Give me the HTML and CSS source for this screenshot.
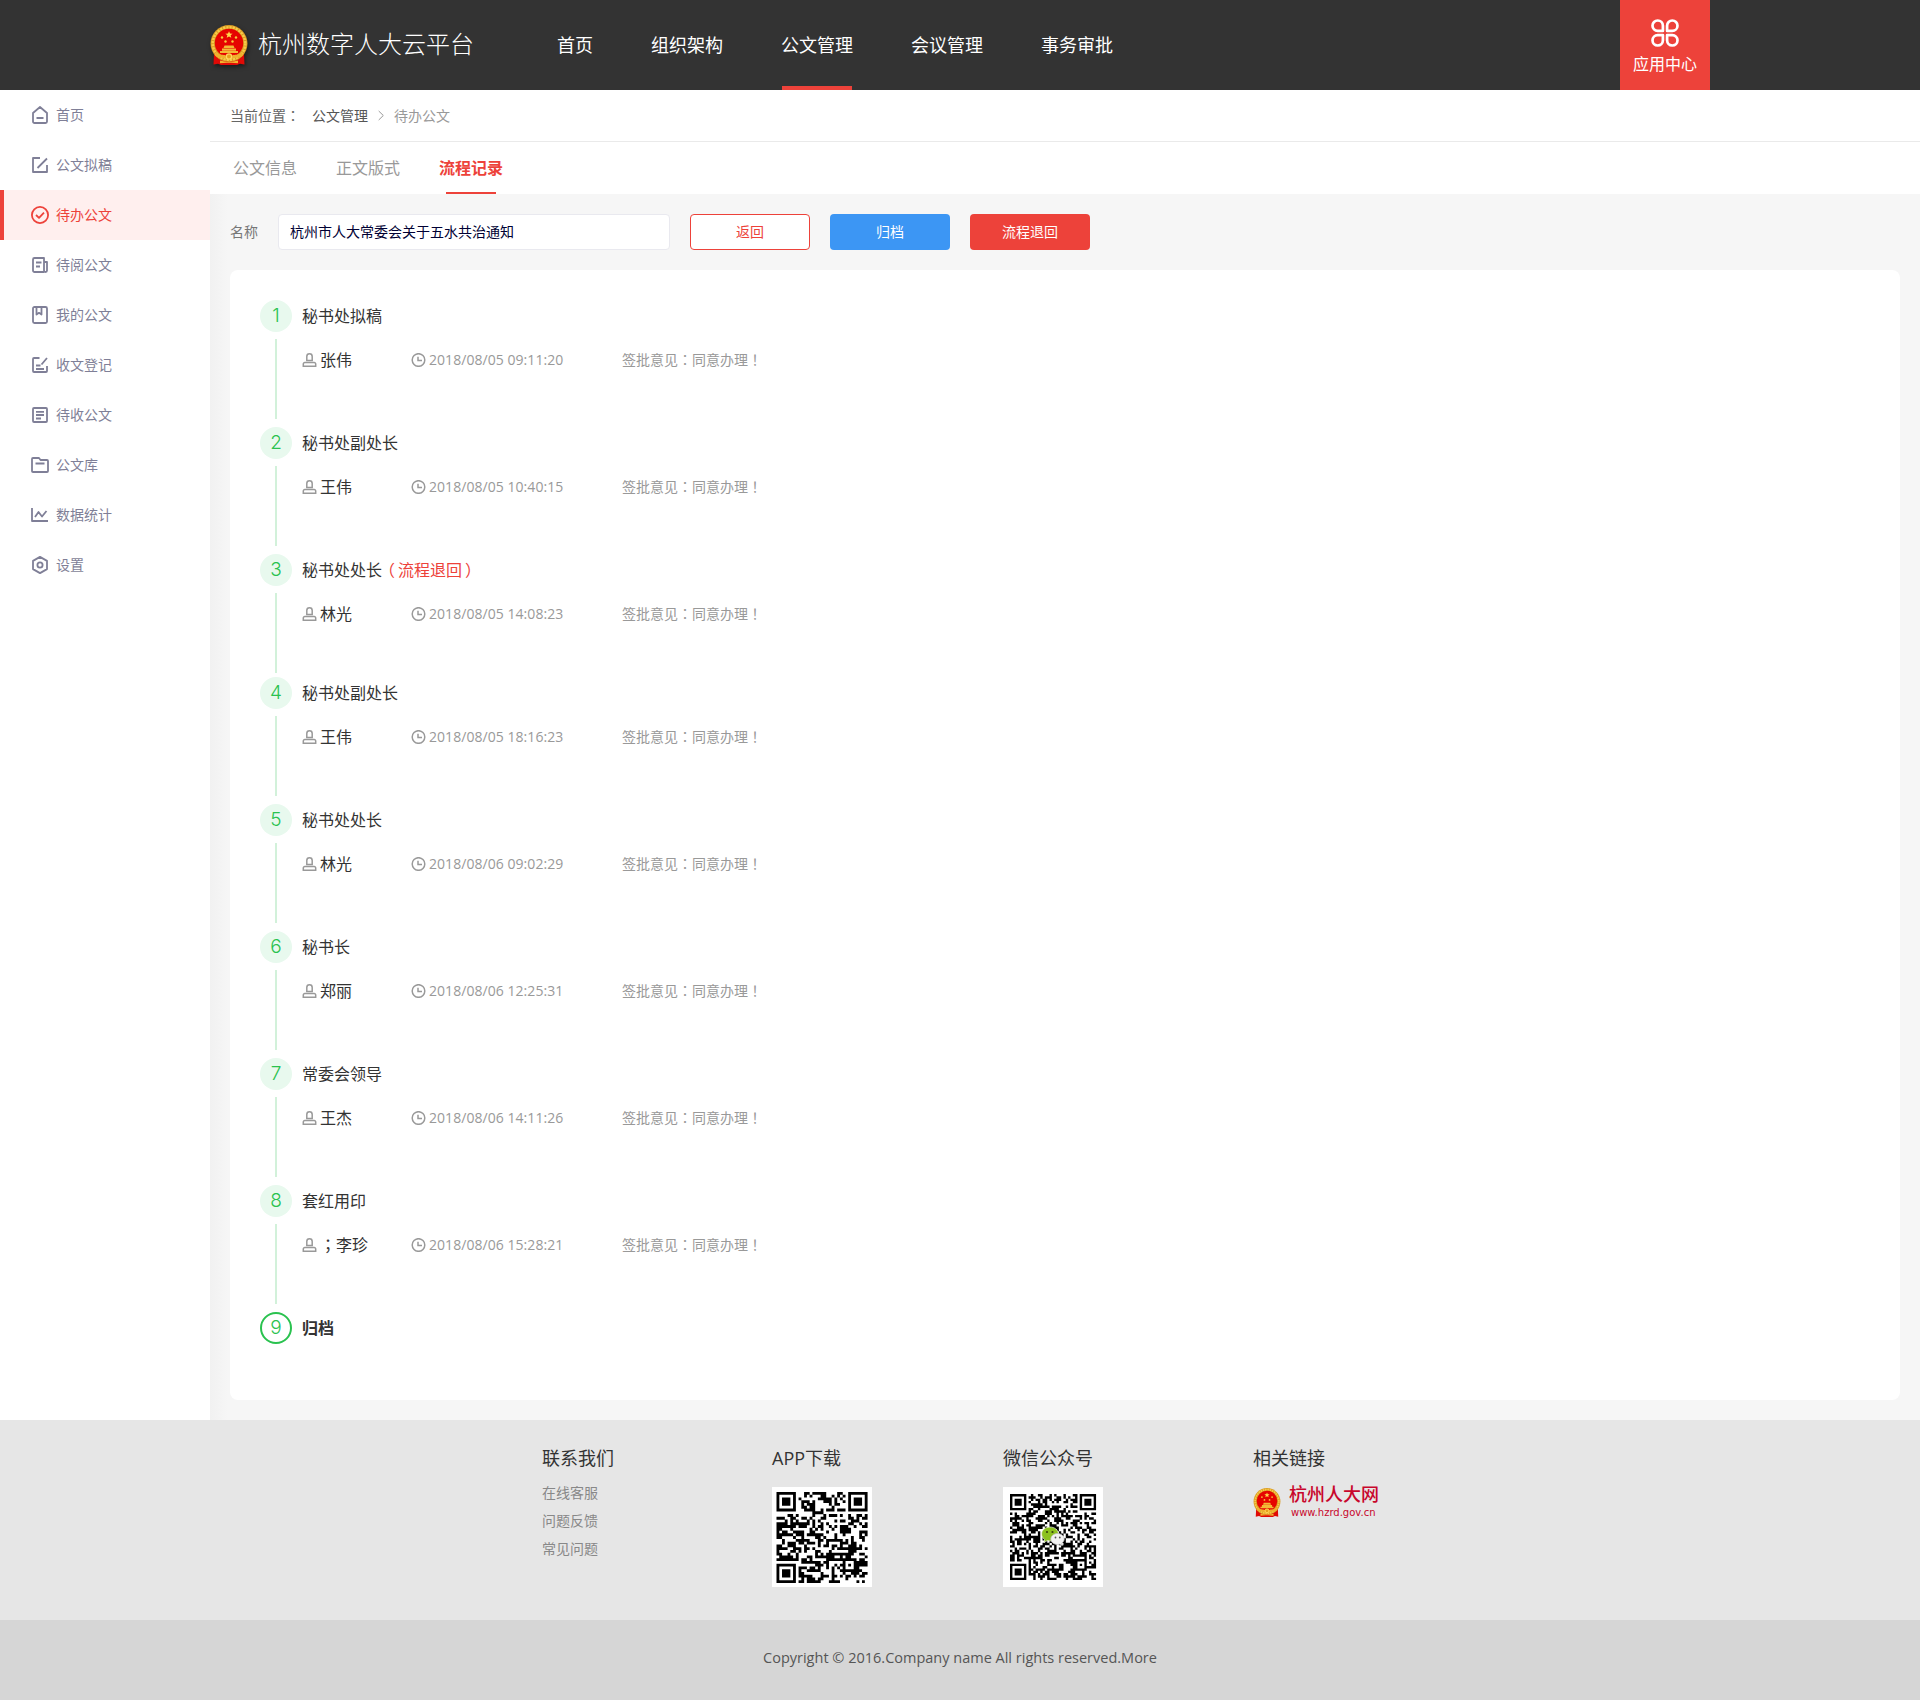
FILE: index.html
```html
<!DOCTYPE html>
<html>
<head>
<meta charset="utf-8">
<title>杭州数字人大云平台</title>
<link rel="stylesheet" href="styles.css">
</head>
<body>
<svg class="sprite" aria-hidden="true">
  <symbol id="emblem" viewBox="0 0 38 40">
    <path d="M4 29h30l.5 10.500-4.500-.8-3 1.300H11l-3-1.300-4.500.8z" fill="#e00a06"/>
    <circle cx="19" cy="18.500" r="18.500" fill="#d99a22"/>
    <circle cx="19" cy="18.500" r="16.300" fill="none" stroke="#f7ca48" stroke-width="2.600" stroke-dasharray="2.200 1"/>
    <circle cx="19" cy="18" r="14.200" fill="#e60400"/>
    <path d="M19 6.200l1 2.300 2.600.2-2 1.600.7 2.500-2.300-1.300-2.300 1.300.7-2.500-2-1.600 2.600-.2z" fill="#ffd84a"/>
    <g fill="#f8c93c"><circle cx="12" cy="12.500" r="1.200"/><circle cx="26" cy="12.500" r="1.200"/><circle cx="15.500" cy="16.500" r="1.200"/><circle cx="22.500" cy="16.500" r="1.200"/></g>
    <path d="M14.500 20.500h9l1 2.500h-11zM12 23.500h14v2.300H12zM10 26h18v2H10z" fill="#f3b936"/>
    <path d="M6 27c4 4 7 2 10 3.500C17 28.500 21 28.500 22 30.500c3-1.500 6 .5 10-3.500l1 3.500c-4 3.500-8 1-11 3.500h-6c-3-2.500-7 0-11-3.500z" fill="#efb02d"/>
    <circle cx="19" cy="31.500" r="2.600" fill="#e8a01b" stroke="#ffd75e" stroke-width="1.200"/>
    <path d="M10 35.500l7 1.500h4l7-1.500v2.800l-7-.6h-4l-7 .6z" fill="#f2b42f"/>
  </symbol>
  <symbol id="i-home" viewBox="0 0 18 18"><path d="M2 7L9 1l7 6v8.500a1.500 1.500 0 0 1-1.500 1.500h-11A1.500 1.500 0 0 1 2 15.500zM5.500 12h7"/></symbol>
  <symbol id="i-draft" viewBox="0 0 18 18"><path d="M9 2H2v14h14V9M6.500 12L16 2.500"/></symbol>
  <symbol id="i-todo" viewBox="0 0 18 18"><circle cx="9" cy="9" r="8.100"/><path d="M5 9l3 2.800 5-5.200"/></symbol>
  <symbol id="i-read" viewBox="0 0 18 18"><path d="M13 16H3.500A1.500 1.500 0 0 1 2 14.500v-11A1.500 1.500 0 0 1 3.500 2H13v12.500a1.500 1.500 0 0 0 3 0V6h-3M5 6.500h5.500M5 10.500h4"/></symbol>
  <symbol id="i-mine" viewBox="0 0 18 18"><rect x="2" y="1" width="14" height="16" rx="1.500"/><path d="M5.500 1v7.500L8 6.800l2.500 1.700V1"/></symbol>
  <symbol id="i-reg" viewBox="0 0 18 18"><path d="M8.500 2H3a1 1 0 0 0-1 1v12a1 1 0 0 0 1 1h12a1 1 0 0 0 1-1V10M10.500 8.500L16 2M5 9.500h4.500M5 13h8"/></symbol>
  <symbol id="i-inbox" viewBox="0 0 18 18"><rect x="2" y="2" width="14" height="14" rx="1"/><path d="M5 5.800h8M5 9h8M5 12.500h5"/></symbol>
  <symbol id="i-folder" viewBox="0 0 18 18"><path d="M1 15.500V3a1 1 0 0 1 1-1h6l1.500 2H16a1 1 0 0 1 1 1v10a1 1 0 0 1-1 1H2a1 1 0 0 1-1-1M4.500 7.500h9"/></symbol>
  <symbol id="i-chart" viewBox="0 0 18 18"><path d="M1 2v13h16M4 11l3.500-5 3.500 4.500L15.500 5"/></symbol>
  <symbol id="i-set" viewBox="0 0 18 18"><path d="M9 .9l7 4v8.200l-7 4-7-4V4.900z"/><circle cx="9" cy="9" r="2.600"/></symbol>
  <symbol id="i-user" viewBox="0 0 14 14"><path d="M4.300 7.500V3.400a2.700 2.600 0 0 1 5.400 0V7.500z"/><path d="M.8 13.200V11a1.500 1.500 0 0 1 1.500-1.500h9.400a1.500 1.500 0 0 1 1.500 1.500v2.200z"/></symbol>
  <symbol id="i-clock" viewBox="0 0 14 14"><circle cx="7" cy="7" r="6.300"/><path d="M6.500 3.800V7.500H10.500"/></symbol>
</svg>

<header class="header">
  <div class="brand"><svg class="brand-emblem"><use href="#emblem"/></svg><span>杭州数字人大云平台</span></div>
  <nav class="nav">
    <a>首页</a><a>组织架构</a><a class="active">公文管理</a><a>会议管理</a><a>事务审批</a>
  </nav>
  <a class="apps">
    <svg viewBox="0 0 28 28"><path d="M11.900 11.900H6.700A5.200 5.200 0 1 1 11.900 6.700zM16.100 11.900V6.700A5.200 5.200 0 1 1 21.300 11.900zM11.900 16.100V21.300A5.200 5.200 0 1 1 6.700 16.100zM16.100 16.100H21.300A5.200 5.200 0 1 1 16.100 21.300z"/></svg>
    <span>应用中心</span>
  </a>
</header>

<div class="body">
  <aside class="sidebar">
    <a><svg><use href="#i-home"/></svg>首页</a>
    <a><svg><use href="#i-draft"/></svg>公文拟稿</a>
    <a class="active"><svg><use href="#i-todo"/></svg>待办公文</a>
    <a><svg><use href="#i-read"/></svg>待阅公文</a>
    <a><svg><use href="#i-mine"/></svg>我的公文</a>
    <a><svg><use href="#i-reg"/></svg>收文登记</a>
    <a><svg><use href="#i-inbox"/></svg>待收公文</a>
    <a><svg><use href="#i-folder"/></svg>公文库</a>
    <a><svg><use href="#i-chart"/></svg>数据统计</a>
    <a><svg><use href="#i-set"/></svg>设置</a>
  </aside>

  <main class="main">
    <div class="crumbs">
      <span>当前位置<span class="punct" lang="zh-TW">：</span></span><span class="crumb-link">公文管理</span>
      <svg viewBox="0 0 6 10"><path d="M.7.500l4.600 4.500L.7 9.500"/></svg>
      <span class="crumb-now">待办公文</span>
    </div>
    <div class="tabs"><a>公文信息</a><a>正文版式</a><a class="active">流程记录</a></div>
    <div class="content">
      <div class="toolbar">
        <label>名称</label>
        <div class="field">杭州市人大常委会关于五水共治通知</div>
        <a class="btn btn-line">返回</a><a class="btn btn-blue">归档</a><a class="btn btn-red">流程退回</a>
      </div>
      <ol class="steps">
        <li class="step">
          <div class="rail"><b>1</b><i></i></div>
          <div class="info"><h3>秘书处拟稿</h3>
            <div class="meta"><span class="who"><svg><use href="#i-user"/></svg>张伟</span><span class="when"><svg><use href="#i-clock"/></svg>2018/08/05 09:11:20</span><span class="note">签批意见<span class="punct" lang="zh-TW">：</span>同意办理<span class="punct" lang="zh-TW">！</span></span></div></div>
        </li>
        <li class="step">
          <div class="rail"><b>2</b><i></i></div>
          <div class="info"><h3>秘书处副处长</h3>
            <div class="meta"><span class="who"><svg><use href="#i-user"/></svg>王伟</span><span class="when"><svg><use href="#i-clock"/></svg>2018/08/05 10:40:15</span><span class="note">签批意见<span class="punct" lang="zh-TW">：</span>同意办理<span class="punct" lang="zh-TW">！</span></span></div></div>
        </li>
        <li class="step returned">
          <div class="rail"><b>3</b><i></i></div>
          <div class="info"><h3>秘书处处长<em><span class="open">（</span>流程退回<span class="close">）</span></em></h3>
            <div class="meta"><span class="who"><svg><use href="#i-user"/></svg>林光</span><span class="when"><svg><use href="#i-clock"/></svg>2018/08/05 14:08:23</span><span class="note">签批意见<span class="punct" lang="zh-TW">：</span>同意办理<span class="punct" lang="zh-TW">！</span></span></div></div>
        </li>
        <li class="step">
          <div class="rail"><b>4</b><i></i></div>
          <div class="info"><h3>秘书处副处长</h3>
            <div class="meta"><span class="who"><svg><use href="#i-user"/></svg>王伟</span><span class="when"><svg><use href="#i-clock"/></svg>2018/08/05 18:16:23</span><span class="note">签批意见<span class="punct" lang="zh-TW">：</span>同意办理<span class="punct" lang="zh-TW">！</span></span></div></div>
        </li>
        <li class="step">
          <div class="rail"><b>5</b><i></i></div>
          <div class="info"><h3>秘书处处长</h3>
            <div class="meta"><span class="who"><svg><use href="#i-user"/></svg>林光</span><span class="when"><svg><use href="#i-clock"/></svg>2018/08/06 09:02:29</span><span class="note">签批意见<span class="punct" lang="zh-TW">：</span>同意办理<span class="punct" lang="zh-TW">！</span></span></div></div>
        </li>
        <li class="step">
          <div class="rail"><b>6</b><i></i></div>
          <div class="info"><h3>秘书长</h3>
            <div class="meta"><span class="who"><svg><use href="#i-user"/></svg>郑丽</span><span class="when"><svg><use href="#i-clock"/></svg>2018/08/06 12:25:31</span><span class="note">签批意见<span class="punct" lang="zh-TW">：</span>同意办理<span class="punct" lang="zh-TW">！</span></span></div></div>
        </li>
        <li class="step">
          <div class="rail"><b>7</b><i></i></div>
          <div class="info"><h3>常委会领导</h3>
            <div class="meta"><span class="who"><svg><use href="#i-user"/></svg>王杰</span><span class="when"><svg><use href="#i-clock"/></svg>2018/08/06 14:11:26</span><span class="note">签批意见<span class="punct" lang="zh-TW">：</span>同意办理<span class="punct" lang="zh-TW">！</span></span></div></div>
        </li>
        <li class="step">
          <div class="rail"><b>8</b><i></i></div>
          <div class="info"><h3>套红用印</h3>
            <div class="meta"><span class="who"><svg><use href="#i-user"/></svg><span class="punct" lang="zh-TW">；</span>李珍</span><span class="when"><svg><use href="#i-clock"/></svg>2018/08/06 15:28:21</span><span class="note">签批意见<span class="punct" lang="zh-TW">：</span>同意办理<span class="punct" lang="zh-TW">！</span></span></div></div>
        </li>
        <li class="step current">
          <div class="rail"><b>9</b></div>
          <div class="info"><h3>归档</h3></div>
        </li>
      </ol>
    </div>
  </main>
</div>

<footer>
  <div class="links">
    <section class="contact"><h4>联系我们</h4><a>在线客服</a><a>问题反馈</a><a>常见问题</a></section>
    <section class="app"><h4>APP下载</h4><svg class="qr" data-size="33" data-seed="7" data-x="4.500" data-y="5" data-span="91"></svg></section>
    <section class="wechat"><h4>微信公众号</h4><div class="qr-wrap"><svg class="qr" data-size="37" data-seed="23" data-x="7" data-y="7" data-span="86"></svg>
      <svg class="wx" viewBox="0 0 24 20"><path d="M9 1c4.700 0 8.400 3.100 8.400 7S13.700 15 9 15l-2.600-.4L3 16.500l.6-3C1.800 12.200.6 10.200.6 8 .6 4.100 4.300 1 9 1z" fill="#8cc21f" stroke="#fff" stroke-width=".6"/><circle cx="6" cy="6" r="1.100" fill="#34410a"/><circle cx="11.500" cy="6" r="1.100" fill="#34410a"/><path d="M16.500 7.500c3.800 0 6.700 2.500 6.700 5.500 0 1.700-.9 3.200-2.300 4.200l.4 2.200-2.600-1.200-2.200.3c-3.800 0-6.700-2.500-6.700-5.500s2.900-5.500 6.700-5.500z" fill="#f2f2f2" stroke="#bbb" stroke-width=".7"/><circle cx="14.500" cy="11.500" r=".9" fill="#555"/><circle cx="18.800" cy="11.500" r=".9" fill="#555"/></svg></div></section>
    <section class="related"><h4>相关链接</h4><a class="site"><svg><use href="#emblem"/></svg><span><strong>杭州人大网</strong><small>www.hzrd.gov.cn</small></span></a></section>
  </div>
  <div class="copy">Copyright © 2016.Company name All rights reserved.More</div>
</footer>
<script src="qr.js"></script>
</body>
</html>
```
FILE: styles.css
```css
* { box-sizing: border-box; }
body { margin: 0; font: 14px/20px "Open Sans", "Noto Sans CJK SC", sans-serif; color: #333; background: #fff; }
svg { display: block; flex: none; }
.sprite { position: absolute; width: 0; height: 0; }
.punct { font-family: "Open Sans", "Noto Sans CJK TC", sans-serif; }
h3, h4 { margin: 0; font-weight: 400; }

.header { display: flex; height: 90px; padding-left: 210px; background: #333; color: #fff; }
.brand { display: flex; align-items: center; width: 347px; font-size: 24px; font-weight: 300; line-height: 36px; white-space: nowrap; }
.brand-emblem { width: 38px; height: 40px; margin-right: 10px; filter: drop-shadow(1px 2px 2px rgba(0,0,0,.5)); }
.brand span { margin-bottom: 4px; font-family: "Noto Sans CJK SC", sans-serif; }
.nav { display: flex; gap: 58px; width: 1063px; font-size: 18px; line-height: 90px; }
.nav a { height: 90px; }
.nav .active { background: linear-gradient(#ed423a, #ed423a) center bottom / 70px 4px no-repeat; }
.apps { display: flex; flex-direction: column; align-items: center; width: 90px; padding-top: 19px; background: #ed423a; font-size: 16px; line-height: 20px; }
.apps svg { width: 28px; height: 28px; margin-bottom: 7px; fill: none; stroke: #fff; stroke-width: 2.7; stroke-linejoin: round; }

.body { display: flex; height: 1330px; }
.sidebar { width: 210px; flex: none; }
.sidebar a { display: flex; align-items: center; height: 50px; padding-left: 31px; color: #7f7f97; }
.sidebar svg { width: 18px; height: 18px; margin-right: 7px; fill: none; stroke: currentColor; stroke-width: 1.8; stroke-linejoin: round; }
.sidebar .active { padding-left: 27px; border-left: 4px solid #ed423a; background: #ffefee; color: #ed423a; }

.main { display: flex; flex-direction: column; flex: 1; }
.crumbs { display: flex; align-items: center; height: 52px; padding-left: 20px; border-bottom: 1px solid #eaeaea; color: #666; }
.crumb-link { margin: 0 10px 0 12px; color: #555; }
.crumbs svg { width: 6px; height: 11px; margin-right: 10px; fill: none; stroke: #999; }
.crumb-now { color: #999; }
.tabs { display: flex; gap: 39px; height: 52px; padding-left: 23px; font-size: 16px; line-height: 52px; color: #999; }
.tabs .active { font-weight: 700; color: #ed423a; background: linear-gradient(#ed423a, #ed423a) 7px bottom / 50px 2px no-repeat; }
.content { flex: 1; padding: 20px; background: linear-gradient(90deg, #f1f1f1, #f6f6f6 18px, #f6f6f6); }
.toolbar { display: flex; align-items: center; gap: 20px; height: 36px; margin-bottom: 20px; color: #777; }
.field { width: 392px; height: 36px; padding-left: 11px; border: 1px solid #e9e9ef; border-radius: 4px; background: #fff; color: #003; line-height: 34px; }
.btn { width: 120px; height: 36px; border-radius: 4px; text-align: center; line-height: 36px; color: #fff; }
.btn-line { border: 1px solid #ed423a; background: #fff; color: #ed423a; line-height: 34px; }
.btn-blue { background: #3c96f4; }
.btn-red { background: #ed423a; }

.steps { height: 1130px; margin: 0; padding: 30px; border-radius: 8px; background: #fff; list-style: none; }
.step { display: flex; height: 127px; }
.step.returned { height: 123px; }
.rail { display: flex; flex-direction: column; align-items: center; gap: 7px; width: 32px; margin-right: 10px; }
.rail b { width: 32px; height: 32px; border-radius: 50%; background: #e8f9ee; color: #2ac24f; font: 300 19px/32px Inter, sans-serif; text-align: center; }
.rail i { width: 2px; height: 80px; background: #d2f1da; }
.current .rail b { border: 2px solid #2ac24f; background: #fff; line-height: 28px; }
.info h3 { height: 32px; margin-bottom: 17px; font-size: 16px; line-height: 32px; }
.info em { color: #ed423a; font-style: normal; }
.open { margin: 0 3px 0 -3px; }
.close { margin-left: 3px; }
.current h3 { font-weight: 700; }
.meta { display: flex; align-items: center; height: 22px; color: #999; }
.who, .when { display: flex; align-items: center; gap: 3px; }
.who { width: 109px; color: #333; font-size: 16px; }
.who .punct { margin-right: -3px; }
.when { width: 211px; letter-spacing: .05px; }
.note { height: 20px; }
.meta svg { width: 15px; height: 14px; fill: none; stroke: #999; stroke-width: 1.5; }

.links { display: flex; height: 200px; padding: 25px 0 0 542px; background: #e6e6e6; }
.links h4 { height: 26px; font-size: 18px; line-height: 26px; }
.contact { display: flex; flex-direction: column; width: 230px; color: #888; }
.contact h4 { color: #333; margin-bottom: 8px; }
.contact a { line-height: 28px; }
.app { width: 231px; }
.wechat { width: 250px; }
.links .app h4, .links .wechat h4 { margin-bottom: 16px; }
.qr { width: 100px; height: 100px; background: #fff; }
.qr-wrap { position: relative; width: 100px; }
.wx { position: absolute; left: 38px; top: 39px; width: 24px; height: 20px; }
.site { display: flex; margin-top: 11px; color: #c8062c; }
.site svg { width: 28px; height: 29px; margin: 6px 8px 0 0; }
.site span { padding-top: 8px; margin-top: -1px; }
.site strong, .site small { display: block; white-space: nowrap; }
.site strong { margin-top: -7px; font-size: 18px; font-weight: 500; line-height: 24px; }
.site small { padding-left: 2px; font: 10px/13px "DejaVu Sans", sans-serif; }
.copy { height: 80px; background: #d6d6d6; color: #555; font-size: 14.5px; line-height: 76px; text-align: center; }
```
FILE: qr.js
```js
// Fills each .qr element with square modules and the three finder marks.
document.querySelectorAll('.qr').forEach(function (svg) {
  var n = +svg.dataset.size, seed = +svg.dataset.seed;
  var d = '';
  function rand() { seed = (seed * 16807) % 2147483647; return seed / 2147483647; }
  for (var i = 0; i < 20; i++) rand();
  function finder(x, y) {
    var ring = Math.max(Math.abs(x - 3), Math.abs(y - 3));
    return ring === 3 || ring <= 1;
  }
  for (var y = 0; y < n; y++) {
    for (var x = 0; x < n; x++) {
      var on = rand() < 0.52;
      if (x < 8 && y < 8) on = x < 7 && y < 7 && finder(x, y);
      else if (x > n - 9 && y < 8) on = x > n - 8 && y < 7 && finder(x - n + 7, y);
      else if (x < 8 && y > n - 9) on = x < 7 && y > n - 8 && finder(x, y - n + 7);
      else if (x >= n - 9 && x < n - 4 && y >= n - 9 && y < n - 4) {
        var r = Math.max(Math.abs(x - n + 7), Math.abs(y - n + 7));
        on = r !== 1;
      }
      if (on) d += 'M' + x + ' ' + y + 'h1.030v1.030h-1.030z';
    }
  }
  var k = svg.dataset.span / n;
  svg.innerHTML = '<path transform="translate(' + svg.dataset.x + ' ' + svg.dataset.y + ') scale(' + k + ')" d="' + d + '"/>';
});
```
